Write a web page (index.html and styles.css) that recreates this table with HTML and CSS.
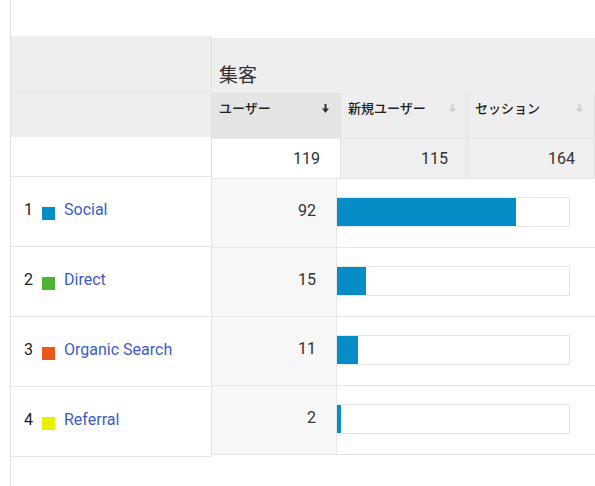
FILE: index.html
```html
<!DOCTYPE html>
<html lang="ja">
<head>
<meta charset="utf-8">
<link rel="stylesheet" href="styles.css">
</head>
<body>
<div class="page">
  <div class="report">
    <div class="dims">
      <div class="dh1"></div>
      <div class="dh2"></div>
      <div class="dsum"></div>
      <div class="drow"><span class="rank">1</span><span class="sq c1"></span><a class="lnk">Social</a></div>
      <div class="drow"><span class="rank">2</span><span class="sq c2"></span><a class="lnk">Direct</a></div>
      <div class="drow"><span class="rank">3</span><span class="sq c3"></span><a class="lnk">Organic Search</a></div>
      <div class="drow last"><span class="rank">4</span><span class="sq c4"></span><a class="lnk">Referral</a></div>
    </div>
    <div class="metrics">
      <div class="group">集客</div>
      <div class="heads">
        <div class="hcell sorted"><span>ユーザー</span><svg class="arr" width="7" height="9" viewBox="0 0 7 9"><rect x="2.5" y="0" width="2" height="5"/><polygon points="0,4.5 7,4.5 3.5,9"/></svg></div>
        <div class="hcell"><span>新規ユーザー</span><svg class="arr" width="7" height="9" viewBox="0 0 7 9"><rect x="2.5" y="0" width="2" height="5"/><polygon points="0,4.5 7,4.5 3.5,9"/></svg></div>
        <div class="hcell"><span>セッション</span><svg class="arr" width="7" height="9" viewBox="0 0 7 9"><rect x="2.5" y="0" width="2" height="5"/><polygon points="0,4.5 7,4.5 3.5,9"/></svg></div>
      </div>
      <div class="sums">
        <div class="scell sorted">119</div>
        <div class="scell">115</div>
        <div class="scell">164</div>
      </div>
      <div class="mrow"><div class="val">92</div><div class="barcell"><div class="track"><div class="fill" style="width:179px"></div></div></div></div>
      <div class="mrow"><div class="val">15</div><div class="barcell"><div class="track"><div class="fill" style="width:29px"></div></div></div></div>
      <div class="mrow"><div class="val">11</div><div class="barcell"><div class="track"><div class="fill" style="width:21px"></div></div></div></div>
      <div class="mrow"><div class="val">2</div><div class="barcell"><div class="track"><div class="fill" style="width:4px"></div></div></div></div>
    </div>
  </div>
</div>
</body>
</html>
```
FILE: styles.css
```css
* { box-sizing: border-box; }
html, body { margin: 0; padding: 0; background: #fff; }
body {
  font-family: Roboto, "Noto Sans CJK JP", sans-serif;
  color: #333;
  width: 595px;
  height: 486px;
  overflow: hidden;
}
.page {
  margin-left: 10px;
  border-left: 1px solid #e0e0e0;
  height: 486px;
  padding-top: 36px;
}
.report {
  display: flex;
  align-items: flex-start;
}
.dims {
  width: 201px;
  flex: none;
  border-right: 1px solid #e4e4e4;
  border-bottom: 1px solid #e6e6e6;
}
.dh1 { height: 55px; background: #eeeeee; }
.dh2 { height: 46px; background: #eeeeee; border-top: 1px solid #e6e6e6; }
.dsum { height: 39px; background: #fff; }
.drow {
  height: 70px;
  border-top: 1px solid #e6e6e6;
  display: flex;
  align-items: center;
  padding-left: 13px;
  padding-bottom: 4px;
  font-size: 16px;
}
.rank { width: 18px; color: #222; }
.sq {
  width: 13px;
  height: 13px;
  margin-right: 9px;
  margin-top: 7px;
  flex: none;
}
.c1 { background: #058dc7; }
.c2 { background: #50b432; }
.c3 { background: #ed561b; }
.c4 { background: #edef00; }
.lnk { color: #3c5bd0; text-decoration: none; }

.metrics {
  flex: 1;
  margin-top: 2px;
  min-width: 0;
}
.group {
  height: 55px;
  background: #eeeeee;
  font-family: "Noto Sans CJK JP", sans-serif;
  font-size: 19px;
  line-height: 1;
  padding-left: 7px;
  display: flex;
  align-items: flex-end;
  padding-bottom: 10px;
  color: #333;
}
.heads, .sums {
  display: grid;
  grid-template-columns: 129px 127px 1fr;
}
.heads { height: 45px; }
.hcell {
  background: #eeeeee;
  border-right: 1px solid #e2e2e2;
  display: flex;
  justify-content: space-between;
  align-items: flex-start;
  padding: 5px 11px 0 7px;
  font-family: "Noto Sans CJK JP", sans-serif;
  font-size: 13px;
  font-weight: 500;
  color: #222;
  white-space: nowrap;
}
.hcell.sorted { background: #e4e4e4; }
.arr { margin-top: 6px; fill: #d0d0d0; flex: none; }
.sorted .arr { fill: #333; }
.sums {
  height: 41px;
  border-bottom: 1px solid #e6e6e6;
}
.scell {
  background: #efefef;
  border-right: 1px solid #e2e2e2;
  border-top: 1px solid #eaeaea;
  text-align: right;
  padding: 10px 19px 0 0;
  font-size: 16px;
}
.scell.sorted { background: #fff; padding-right: 20px; }
.mrow {
  height: 69px;
  display: flex;
  border-bottom: 1px solid #e6e6e6;
}
.val {
  width: 125px;
  flex: none;
  background: #f7f7f7;
  border-right: 1px solid #e8e8e8;
  text-align: right;
  padding-right: 20px;
  font-size: 16px;
  display: flex;
  align-items: center;
  justify-content: flex-end;
  padding-bottom: 5px;
}
.barcell {
  flex: 1;
  display: flex;
  align-items: center;
  padding-bottom: 2px;
}
.track {
  width: 233px;
  height: 30px;
  border: 1px solid #e6e6e6;
  border-left: none;
  display: flex;
}
.fill { background: #068dc7; height: 100%; }
```
